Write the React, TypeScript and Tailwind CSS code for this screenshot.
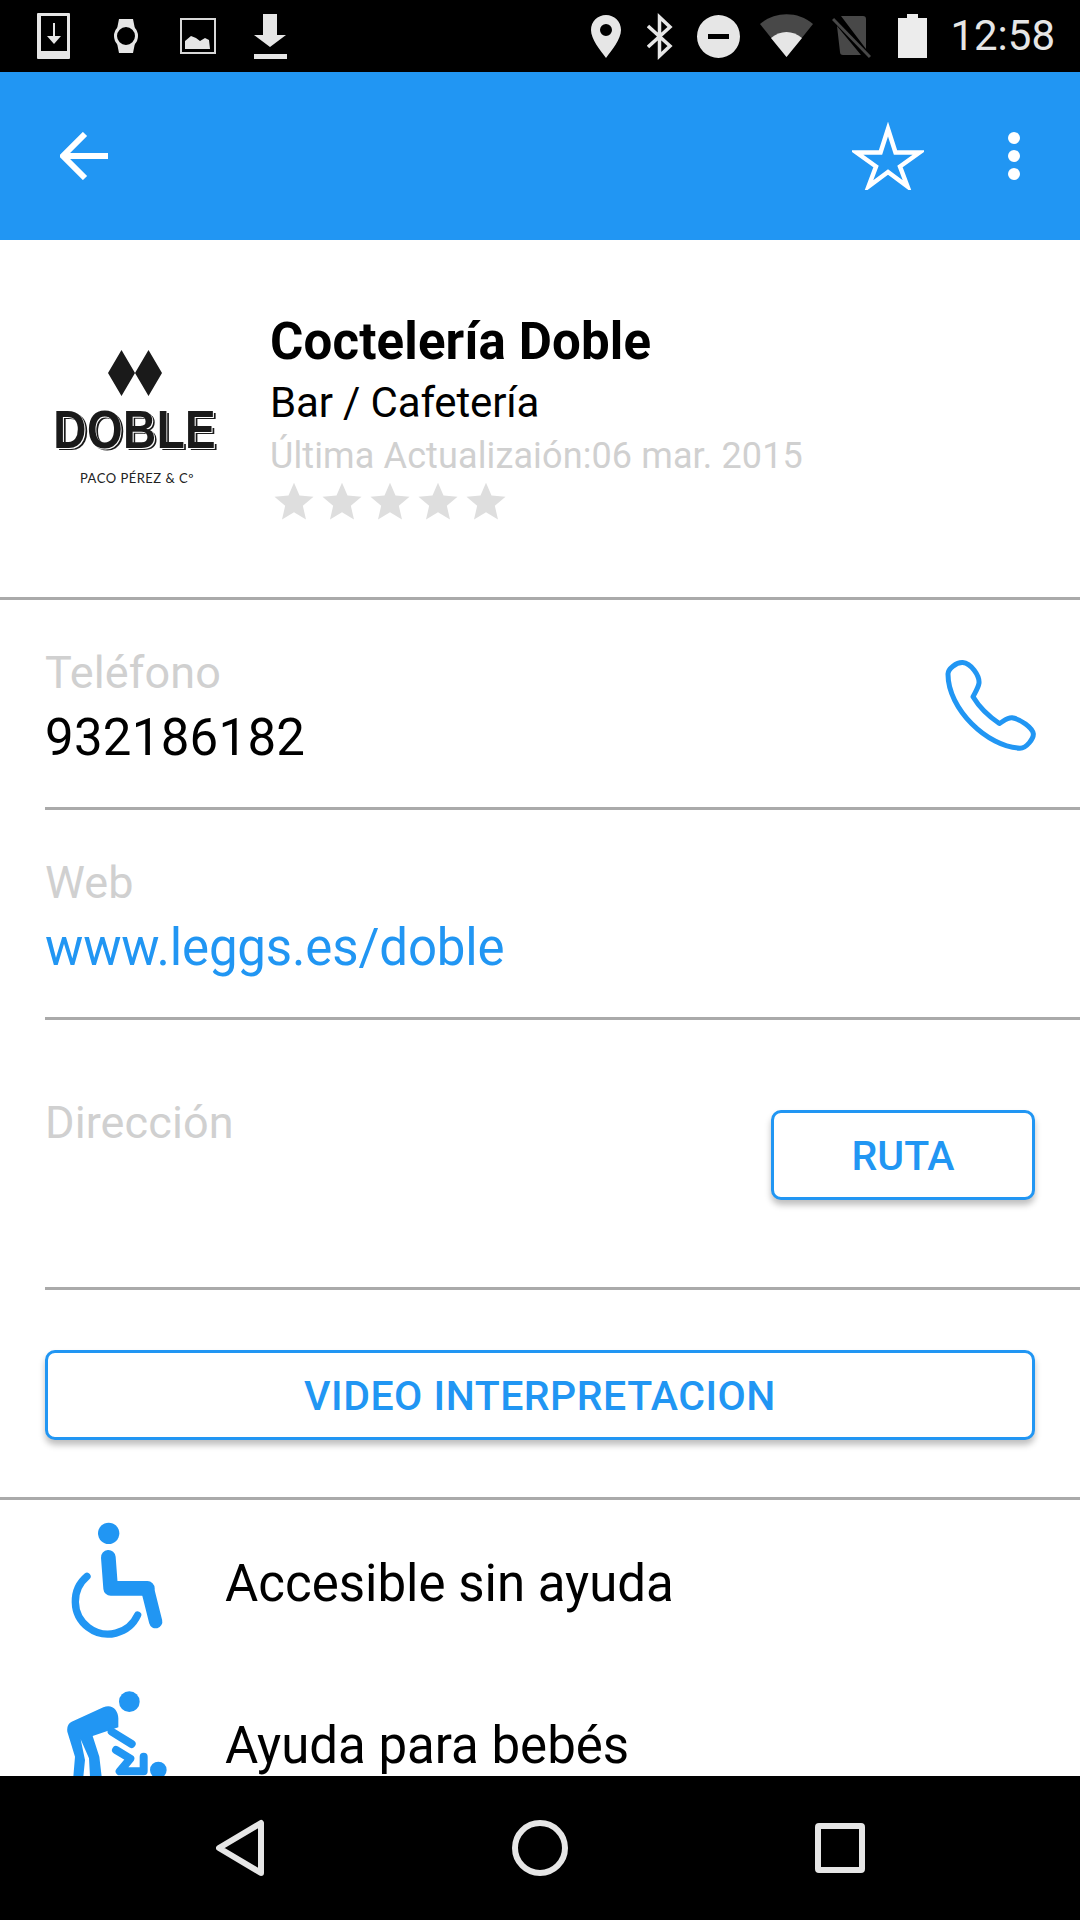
import type {ReactNode} from 'react'

const blue = '#2196f3'

function StatusBar() {
  return (
    <div className="flex h-[72px] shrink-0 items-center justify-between bg-black pl-[37px] pr-[25px]">
      <div className="flex">
        <svg className="h-[72px] w-[33px]" viewBox="37 0 33 72">
          <path fillRule="evenodd" fill="#e6e6e6" d="M38 13h31a1 1 0 0 1 1 1v44a1 1 0 0 1-1 1H38a1 1 0 0 1-1-1V14a1 1 0 0 1 1-1zM41 16v35h26V16z" />
          <path fill="#e6e6e6" d="M53 23h2v13h6l-7 8-7-8h6z" />
        </svg>
        <svg className="ml-[44px] h-[72px] w-[24px]" viewBox="114 0 24 72">
          <path fill="#e6e6e6" d="M119 19h14l2 10h-18zM117 43h18l-2 10h-14z" />
          <circle cx="126" cy="36" r="10.500" fill="#000" stroke="#e6e6e6" strokeWidth="3" />
        </svg>
        <svg className="ml-[42px] h-[72px] w-[36px]" viewBox="180 0 36 72">
          <rect x="181" y="19" width="34" height="34" fill="none" stroke="#d8d8d8" strokeWidth="2" />
          <path fill="#e6e6e6" d="M185 41l6-5 5 2 4 3 5-3 4 2 1 9h-25z" />
        </svg>
        <svg className="ml-[38px] h-[72px] w-[33px]" viewBox="254 0 33 72">
          <path fill="#e6e6e6" d="M263 14h14v21h9l-16 12-16-12h9zM254 54h33v5h-33z" />
        </svg>
      </div>
      <div className="flex items-center">
        <svg className="h-[72px] w-[30px]" viewBox="592 0 30 72">
          <path fillRule="evenodd" fill="#e6e6e6" d="M607 15c8.300 0 15 6.500 15 15 0 9-9 20-15 28-6-8-15-19-15-28 0-8.500 6.700-15 15-15zM607 24a6 6 0 1 0 0 12 6 6 0 0 0 0-12z" />
        </svg>
        <svg className="ml-[26px] h-[72px] w-[26px]" viewBox="647 0 26 72">
          <path fill="none" stroke="#e6e6e6" strokeWidth="3.500" d="M648 26l22 20-10.500 10V17L670 27l-22 20" />
        </svg>
        <svg className="ml-[24px] h-[72px] w-[43px]" viewBox="698 0 43 72">
          <path fillRule="evenodd" fill="#e6e6e6" d="M719.500 15a21.500 21.500 0 1 1 0 43 21.500 21.500 0 0 1 0-43zM709 34v5h21v-5z" />
        </svg>
        <svg className="ml-[20px] h-[72px] w-[53px]" viewBox="761 0 53 72">
          <path fill="#484848" d="M761 24c15-13 38-13 53 0l-26.500 33z" />
          <path fill="#e6e6e6" d="M772 38c9-8 22-8 31 0l-15.500 19z" />
        </svg>
        <svg className="ml-[19px] h-[72px] w-[39px]" viewBox="833 0 39 72">
          <path fill="#484848" d="M842 16h22a3 3 0 0 1 3 3v30zM838 26l24 29h-18a3 3 0 0 1-3-3z" />
          <path fill="none" stroke="#484848" strokeWidth="3" d="M834 19l37 38" />
        </svg>
        <svg className="ml-[27px] h-[72px] w-[29px]" viewBox="899 0 29 72">
          <path fill="#ececec" d="M908 14h11v4h9v40h-29V18h9z" />
        </svg>
        <span className="ml-[23px] font-['Roboto',sans-serif] text-[42px] leading-none text-[#e6e6e6]">12:58</span>
      </div>
    </div>
  )
}

function AppBar() {
  return (
    <div className="flex h-[168px] shrink-0 items-center justify-between bg-[#2196f3] pl-[60px] pr-[60px]">
      <svg className="h-[48px] w-[48px]" viewBox="60 132 48 48">
        <path fill="none" stroke="#fff" strokeWidth="6" d="M85 134l-22 22 22 22M64 156h44" />
      </svg>
      <div className="flex items-center">
        <svg className="h-[68px] w-[72px]" viewBox="852 122 72 68">
          <path fill="none" stroke="#fff" strokeWidth="4.500" strokeLinejoin="miter" d="M888 129l7.500 23.500h24l-19.500 14 7.500 20-19.500-14.500-19.500 14.500 7.500-20-19.500-14h24z" />
        </svg>
        <div className="ml-[84px] flex flex-col gap-[6px]">
          <span className="h-[12px] w-[12px] rounded-full bg-white" />
          <span className="h-[12px] w-[12px] rounded-full bg-white" />
          <span className="h-[12px] w-[12px] rounded-full bg-white" />
        </div>
      </div>
    </div>
  )
}

function Logo() {
  return (
    <div className="flex w-[170px] flex-col items-center">
      <svg className="h-[46px] w-[54px]" viewBox="0 0 54 46">
        <path fill="#1a1a1a" d="M13.500 0L27 23 13.500 46 0 23zM40.500 0L54 23 40.500 46 27 23z" />
      </svg>
      <span className="mt-[10px] scale-x-[0.85] font-['Liberation_Sans',sans-serif] text-[54px] font-bold leading-[46px] tracking-[0.5px] text-[#1a1a1a] [text-shadow:1px_1px_0_#fff,3px_2px_0_#1a1a1a]">
        DOBLE
      </span>
      <span className="ml-[4px] mt-[19px] whitespace-nowrap font-['Lato',sans-serif] text-[13px] leading-[14px] tracking-[0.5px] text-[#222]">
        PACO PÉREZ &amp; Cº
      </span>
    </div>
  )
}

function Star() {
  return (
    <svg className="h-[40px] w-[40px] shrink-0" viewBox="0 0 24 24">
      <path fill="#dedede" d="M12 1l3.300 7.700 8.400.7-6.400 5.500 1.900 8.200L12 18.700l-7.200 4.400 1.900-8.200L.3 9.400l8.400-.7z" />
    </svg>
  )
}

function Header() {
  return (
    <div className="flex h-[360px] shrink-0 items-start border-b-[3px] border-[#aaaaaa]">
      <div className="ml-[50px] mt-[110px]">
        <Logo />
      </div>
      <div className="ml-[50px] mt-[71px] flex flex-col font-['Roboto',sans-serif]">
        <span className="text-[51px] font-bold leading-[62px] tracking-[0.15px] text-black">Coctelería Doble</span>
        <span className="mt-[5px] text-[42px] leading-[50px] tracking-[-0.15px] text-black">Bar / Cafetería</span>
        <span className="text-[36px] leading-[56px] tracking-[0.12px] text-[#d0d0d0]">Última Actualizaión:06 mar. 2015</span>
        <div className="mt-[-3px] flex gap-[8px] pl-[4px]">
          <Star />
          <Star />
          <Star />
          <Star />
          <Star />
        </div>
      </div>
    </div>
  )
}

function Field({label, value, link}: {label: string; value: string; link?: boolean}) {
  return (
    <div className="flex flex-col pt-[48px] font-['Roboto',sans-serif]">
      <span className="text-[45px] leading-[50px] tracking-[0.1px] text-[#d0d0d0]">{label}</span>
      <span className={link ? 'mt-[15px] text-[51px] leading-[50px] tracking-[-0.15px] text-[#2196f3]' : 'mt-[15px] text-[51px] leading-[50px] tracking-[0.25px] text-black'}>
        {value}
      </span>
    </div>
  )
}

function OutlineButton({label, className}: {label: string; className: string}) {
  return (
    <div className={`flex h-[90px] shrink-0 items-center justify-center rounded-[10px] border-[3px] border-[#2196f3] bg-white pt-[3px] font-['Roboto',sans-serif] text-[41px] font-medium text-[#2196f3] shadow-[0_5px_6px_rgba(0,0,0,0.25)] ${className}`}>
      {label}
    </div>
  )
}

function Details() {
  return (
    <div className="shrink-0 pl-[45px]">
      <div className="flex h-[210px] items-start justify-between border-b-[3px] border-[#aaaaaa]">
        <Field label="Teléfono" value="932186182" />
        <svg className="mr-[39px] mt-[57px] h-[97px] w-[100px]" viewBox="120 80 300 290" style={{color: blue}}>
          <path fill="none" stroke="currentColor" strokeWidth="15" strokeLinejoin="round" d="M185 96C210 98 236 135 234 158C232 172 222 186 216 199C234 229 268 261 295 279C309 271 320 261 333 262C358 265 395 292 397 310C398 324 377 353 357 353C260 350 140 235 141 130C141 115 166 95 185 96Z" />
        </svg>
      </div>
      <div className="h-[210px] border-b-[3px] border-[#aaaaaa]">
        <Field label="Web" value="www.leggs.es/doble" link />
      </div>
      <div className="flex h-[270px] items-start justify-between border-b-[3px] border-[#aaaaaa] pr-[45px]">
        <span className="mt-[78px] font-['Roboto',sans-serif] text-[45px] leading-[50px] tracking-[0.1px] text-[#d0d0d0]">Dirección</span>
        <OutlineButton label="RUTA" className="mt-[90px] w-[264px]" />
      </div>
    </div>
  )
}

function FeatureRow({label, children}: {label: string; children: ReactNode}) {
  return (
    <div className="flex h-[162px] shrink-0 items-center pl-[60px]">
      {children}
      <span className="ml-[45px] mt-[7px] font-['Roboto',sans-serif] text-[51px] text-black">{label}</span>
    </div>
  )
}

function NavBar() {
  return (
    <div className="flex h-[144px] shrink-0 items-center bg-black pl-[216px]">
      <svg className="h-[144px] w-[48px]" viewBox="216 1776 48 144">
        <path fill="none" stroke="#e6e6e6" strokeWidth="6" strokeLinejoin="round" d="M261 1823v50l-42-25z" />
      </svg>
      <svg className="ml-[248px] h-[144px] w-[56px]" viewBox="512 1776 56 144">
        <circle cx="540" cy="1848" r="25" fill="none" stroke="#e6e6e6" strokeWidth="6" />
      </svg>
      <svg className="ml-[247px] h-[144px] w-[50px]" viewBox="815 1776 50 144">
        <rect x="818" y="1826" width="44" height="44" rx="1" fill="none" stroke="#e6e6e6" strokeWidth="6" />
      </svg>
    </div>
  )
}

export default function App() {
  return (
    <div className="flex h-[1920px] w-[1080px] flex-col overflow-hidden bg-white">
      <StatusBar />
      <AppBar />
      <div className="flex min-h-0 flex-1 flex-col overflow-hidden">
        <Header />
        <Details />
        <div className="flex h-[210px] shrink-0 flex-col border-b-[3px] border-[#aaaaaa] px-[45px] pt-[60px]">
          <OutlineButton label="VIDEO INTERPRETACION" className="w-full tracking-[0.5px]" />
        </div>
        <FeatureRow label="Accesible sin ayuda">
          <svg className="h-[162px] w-[120px] shrink-0" viewBox="60 0 360 486" style={{color: blue}}>
            <circle cx="206" cy="100" r="32" fill="currentColor" />
            <path fill="none" stroke="currentColor" strokeWidth="44" strokeLinejoin="round" strokeLinecap="round" d="M205 172l7 93h110" />
            <path fill="none" stroke="currentColor" strokeWidth="40" strokeLinecap="round" d="M322 265l25 100" />
            <path fill="none" stroke="currentColor" strokeWidth="22" strokeLinecap="round" d="M141 229A98 98 0 1 0 293 345" />
          </svg>
        </FeatureRow>
        <FeatureRow label="Ayuda para bebés">
          <svg className="h-[162px] w-[120px] shrink-0" viewBox="60 486 360 486" style={{color: blue}}>
            <circle cx="268" cy="605" r="31" fill="currentColor" />
            <path fill="currentColor" d="M95 665L190 622C215 610 235 630 235 655V682L158 708L178 770L185 830H150L147 775L122 718L135 780L130 830H100L105 770L82 695C80 680 85 670 95 665Z" />
            <path fill="none" stroke="currentColor" strokeWidth="24" strokeLinecap="round" d="M215 695l60 37" />
            <path fill="none" stroke="currentColor" strokeWidth="24" strokeLinecap="round" strokeLinejoin="round" d="M228 750l43 26-32 38h72v-44" />
            <circle cx="355" cy="810" r="25" fill="currentColor" />
          </svg>
        </FeatureRow>
      </div>
      <NavBar />
    </div>
  )
}
